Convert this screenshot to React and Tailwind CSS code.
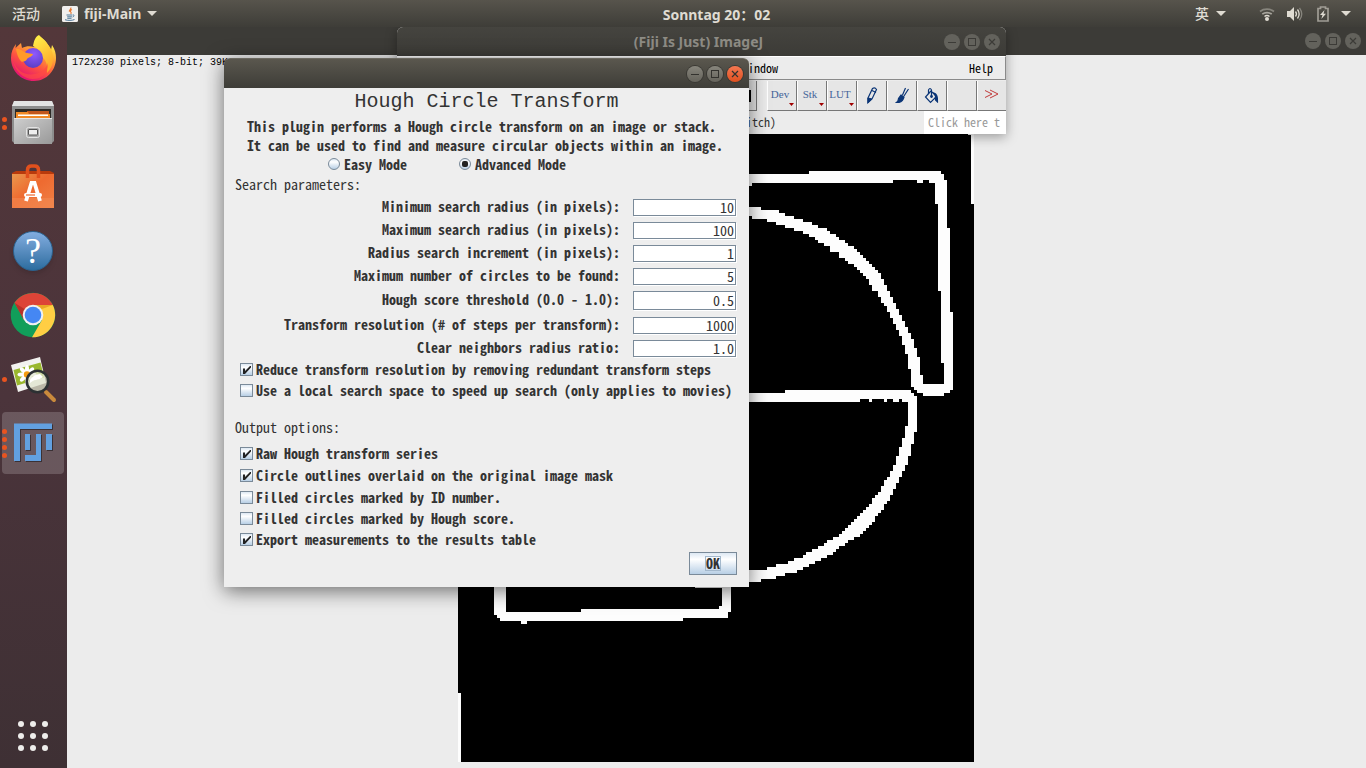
import React from "react";

const MONO = "font-['Noto_Sans_Mono_CJK_SC','DejaVu_Sans_Mono',monospace]";
const UI = "font-['Noto_Sans','Noto_Sans_CJK_SC',sans-serif]";

const FIELDS = [
  { id: "min-radius", label: "Minimum search radius (in pixels):", value: "10", row: "h-[23px]", box: "h-[17px]" },
  { id: "max-radius", label: "Maximum search radius (in pixels):", value: "100", row: "h-[23px]", box: "h-[17px]" },
  { id: "increment", label: "Radius search increment (in pixels):", value: "1", row: "h-[23px]", box: "h-[17px]" },
  { id: "max-circles", label: "Maximum number of circles to be found:", value: "5", row: "h-[23px]", box: "h-[17px]" },
  { id: "threshold", label: "Hough score threshold (0.0 - 1.0):", value: "0.5", row: "h-[25px]", box: "h-[19px]" },
  { id: "resolution", label: "Transform resolution (# of steps per transform):", value: "1000", row: "h-[25px]", box: "h-[17px]" },
  { id: "ratio", label: "Clear neighbors radius ratio:", value: "1.0", row: "h-[21px]", box: "h-[17px]" },
];

const OUTPUTS = [
  { label: "Raw Hough transform series", on: true, row: "h-[21px]" },
  { label: "Circle outlines overlaid on the original image mask", on: true, row: "h-[22px]" },
  { label: "Filled circles marked by ID number.", on: false, row: "h-[22px]" },
  { label: "Filled circles marked by Hough score.", on: false, row: "h-[21px]" },
  { label: "Export measurements to the results table", on: true, row: "h-[21px]" },
];

function Caret() {
  return (
    <svg width="10" height="5" viewBox="0 0 10 5" aria-hidden="true">
      <path d="M0 0h10L5 5z" fill="#dfdbd2" />
    </svg>
  );
}

function TopBar() {
  return (
    <header className={`${UI} grid h-[27px] shrink-0 grid-cols-[1fr_auto_1fr] items-center bg-linear-to-b from-[#57544c] to-[#3e3d38] text-sm font-bold text-[#dfdbd2]`}>
      <div className="flex items-center pl-3">
        <button className="font-medium">活动</button>
        <button className="ml-[22px] flex items-center">
          <svg width="16" height="16" viewBox="0 0 16 16" aria-hidden="true">
            <rect width="16" height="16" rx="1.5" fill="#f1efed" />
            <path d="M8.8 1.5c1 1.6-2.2 2.500-1.400 4.200M10 3.500c-2 1-1.800 1.900-1 2.800.4.600 0 1.200-.5 1.500" stroke="#e8762d" strokeWidth="1.100" fill="none" />
            <path d="M4.500 9h5.800M5.200 10.800h4.700M5.300 12.300h4.200M3 13.700c2.500 1 7.500.9 9.500-.2M10.800 9c1.700-.3 1.700 1.400-.2 2" stroke="#3a6a90" strokeWidth=".9" fill="none" />
          </svg>
          <span className="mx-1.5">fiji-Main</span>
          <Caret />
        </button>
      </div>
      <div className="pl-[67px] pt-0.5 text-center">Sonntag 20：02</div>
      <div className="flex items-center justify-end pr-[15px]">
        <button className="mr-[33px] flex items-center gap-[7px] font-medium">英<Caret /></button>
        <button className="flex items-center" aria-label="System">
          <svg width="16" height="16" viewBox="0 0 16 16" fill="none" aria-hidden="true">
            <path d="M1 5.500a10 8 0 0 1 14 0" stroke="#87857d" strokeWidth="1.700" />
            <path d="M3.300 8.200a6.500 5 0 0 1 9.400 0" stroke="#a9a69e" strokeWidth="1.700" />
            <path d="M5.500 10.500a3.500 3 0 0 1 5 0" stroke="#dfdbd2" strokeWidth="1.500" />
            <circle cx="8" cy="13" r="2" fill="#dfdbd2" />
          </svg>
          <svg className="ml-3" width="16" height="16" viewBox="0 0 16 16" fill="none" aria-hidden="true">
            <path d="M0 5h3l4-4v14l-4-4H0z" fill="#dfdbd2" />
            <path d="M8.500 5.500q2 2.500 0 5M10.500 3.500q3.300 4.500 0 9" stroke="#dfdbd2" strokeWidth="1.300" />
            <path d="M12.500 1.800q4.500 6.200 0 12.400" stroke="#87857d" strokeWidth="1.300" />
          </svg>
          <svg className="ml-3.5" width="12" height="16" viewBox="0 0 12 16" aria-hidden="true">
            <path d="M3.500 1h5v1.500H11V15H1V2.500h2.500z" fill="none" stroke="#a09d95" strokeWidth="1.700" />
            <path d="M7.500 4 3 9h2.500L4.300 13 9 7.700H6.500z" fill="#dfdbd2" />
          </svg>
          <span className="ml-3"><Caret /></span>
        </button>
      </div>
    </header>
  );
}

function FirefoxIcon() {
  return (
    <svg width="66" height="64" viewBox="0 0 66 64" aria-hidden="true">
      <defs>
        <linearGradient id="fx" x1="0.8" y1="0.1" x2="0.3" y2="1">
          <stop offset="0" stopColor="#fff44f" /><stop offset=".3" stopColor="#ffa436" />
          <stop offset=".6" stopColor="#ff5340" /><stop offset="1" stopColor="#e00c78" />
        </linearGradient>
        <radialGradient id="fxg" cx=".55" cy=".3" r=".7">
          <stop offset="0" stopColor="#9059ff" /><stop offset="1" stopColor="#5b3fc4" />
        </radialGradient>
        <linearGradient id="fxt" x1="0" y1="0" x2=".4" y2="1">
          <stop offset="0" stopColor="#fff74a" /><stop offset="1" stopColor="#ffa72b" />
        </linearGradient>
      </defs>
      <path d="M11 31c0-6 2-10 5-14l-.5 4 5.500-5 1 5c4-2 8-2 12-1 4-4 2-8 5-11 9 5 10 12 12 14l1-5c3 4 4 9 4 13 0 12-9 23-22 23S11 44 11 31z" fill="url(#fx)" />
      <path d="M33 19c1-5 2-9 6-11 6 6 10 10 12 14 4 9 2 18-4 24 1-6 0-12-5-16-1-6-5-9-9-11z" fill="url(#fxt)" />
      <circle cx="33" cy="31" r="10" fill="url(#fxg)" />
      <path d="M16 22c4-1 7 3 11 4l6 1c-1 3-4 3-6 5-1 3-4 2-5 3-3-2-5-7-6-13z" fill="#ff9a2a" />
      <path d="M13 34c4 10 12 15 22 13 6-1 11-5 13-11 0 12-8 16-15 16-10 0-18-8-20-18z" fill="#ff4a45" opacity=".65" />
    </svg>
  );
}

function FilesIcon() {
  return (
    <svg width="66" height="64" viewBox="0 0 66 64" aria-hidden="true">
      <defs>
        <linearGradient id="cab" x1="0" y1="0" x2="1" y2="1"><stop offset="0" stopColor="#cecece" /><stop offset="1" stopColor="#999" /></linearGradient>
      </defs>
      <path d="M14 10h38l2 5v35l-2 2H14l-2-2V15z" fill="#8d8d8d" />
      <path d="M14 10h38l2 5H12z" fill="#e3e3e3" />
      <path d="M15 18h36v10H15z" fill="#2d2a26" />
      <path d="M27 20h22v4H27z" fill="#c2571c" />
      <path d="M16 21h12l1 2h21v5H16z" fill="#f08a26" />
      <path d="M18 23.500h30V25H18z" fill="#fff" />
      <path d="M14 27h38v26H14z" fill="url(#cab)" />
      <path d="M14 27.500h38" stroke="#e6e6e6" />
      <rect x="26.500" y="36.500" width="13" height="10" rx="2" fill="#aaa" stroke="#e4e4e4" />
      <rect x="28.500" y="38.500" width="9" height="5.500" rx=".5" fill="#eee" stroke="#555" />
    </svg>
  );
}

function SoftwareIcon() {
  return (
    <svg width="66" height="64" viewBox="0 0 66 64" aria-hidden="true">
      <defs><linearGradient id="bag" x1="0" y1="0" x2="1" y2="1"><stop offset="0" stopColor="#e9984d" /><stop offset=".45" stopColor="#ee6a30" /><stop offset="1" stopColor="#f08045" /></linearGradient></defs>
      <path d="M12 18l4-2h34l4 2v4H12z" fill="#b93a0c" />
      <path d="M12 19h42v34H12z" fill="url(#bag)" />
      <path d="M12 43h42v10H12z" fill="#f38a53" opacity=".55" />
      <path d="M27.500 23v-8q0-4 4-4h3q4 0 4 4v8" fill="none" stroke="#e1501d" strokeWidth="3.500" />
      <path d="M26 46l5.500-18h3L40 46" fill="none" stroke="#fff" strokeWidth="3.800" />
      <rect x="24" y="38" width="18" height="4" rx="2" fill="#fff" />
      <path d="M26 40h9" stroke="#ee6a30" strokeWidth="1.200" />
    </svg>
  );
}

function HelpIcon() {
  return (
    <span className="flex h-16 w-[66px] items-center justify-center">
      <span className="flex h-10 w-10 items-center justify-center rounded-full border border-[#2a628f] bg-linear-to-b from-[#82ade0] to-[#2c6d9f] font-['Liberation_Serif',serif] text-[36px] leading-none text-white shadow-md">?</span>
    </span>
  );
}

function ChromeIcon() {
  return (
    <svg width="66" height="64" viewBox="0 0 66 64" aria-hidden="true">
      <circle cx="33" cy="32" r="22.300" fill="#119e5a" />
      <path d="M33 32V22h19.800A22.300 22.300 0 0 1 32 54.200L42 37z" fill="#ffce44" />
      <path d="M33 22h19.800A22.300 22.300 0 0 0 14.500 19.800L24 37z" fill="#dd4437" />
      <path d="M14.500 19.800 24 37l2-10z" fill="#b83228" />
      <path d="M33 22h19.800L42 26z" fill="#e9a825" />
      <circle cx="33" cy="32" r="10.300" fill="#f1f1f1" />
      <circle cx="33" cy="32" r="8.300" fill="#4587f3" />
    </svg>
  );
}

function ViewerIcon() {
  return (
    <svg width="66" height="64" viewBox="0 0 66 64" aria-hidden="true">
      <path d="M11 18l29-8 6 26-28 9z" fill="#f2f2ef" />
      <path d="M13.500 23l27-7.500 3.500 15-27 8z" fill="#9ab82e" />
      <g fill="#fff">
        {[0, 45, 90, 135, 180, 225, 270, 315].map((a) => (
          <ellipse key={a} cx="27" cy="22" rx="2" ry="4" transform={`rotate(${a} 27 27.500)`} />
        ))}
      </g>
      <circle cx="27" cy="27.500" r="3.200" fill="#f59c12" />
      <circle cx="37.500" cy="34.500" r="10.500" fill="#dfe4ce" fillOpacity=".75" />
      <path d="M30 33q4-6 10-6l3 3q-4 3-7 3t-6 3z" fill="#fff" />
      <path d="M46 45l8 8" stroke="#c98a3c" strokeWidth="4" strokeLinecap="round" />
      <circle cx="37.500" cy="34.500" r="10.700" fill="none" stroke="#2c3133" strokeWidth="2.600" />
    </svg>
  );
}

function FijiIcon() {
  return (
    <svg width="66" height="64" viewBox="0 0 66 64" aria-hidden="true">
      {["#3b3135", "#62a0e0"].map((fill, i) => (
        <path key={fill} fill={fill} transform={i === 0 ? "translate(1 1)" : undefined}
          d="M14 12.500h38V18H20v32h-6zM25 23h5v16h-5zM46 23h6v16h-6zM36 23h5v27H25v-6h11z" />
      ))}
    </svg>
  );
}

const DOCK = [
  { name: "Firefox", Icon: FirefoxIcon, dots: 0 },
  { name: "Files", Icon: FilesIcon, dots: 2 },
  { name: "Software", Icon: SoftwareIcon, dots: 0 },
  { name: "Help", Icon: HelpIcon, dots: 0 },
  { name: "Chrome", Icon: ChromeIcon, dots: 0 },
  { name: "Image Viewer", Icon: ViewerIcon, dots: 1 },
  { name: "Fiji", Icon: FijiIcon, dots: 4, active: true },
];

function Dock() {
  return (
    <nav className="flex w-[67px] shrink-0 flex-col bg-linear-to-b from-[#53373a] via-[#4b343b] to-[#3e3034]">
      {DOCK.map(({ name, Icon, dots, active }) => (
        <button key={name} aria-label={name} className="relative h-16">
          {active && <span className="absolute inset-y-px left-0.5 right-[3px] rounded bg-white/18" />}
          <span className="relative block"><Icon /></span>
          <span className="absolute inset-y-0 left-0.5 flex flex-col justify-center gap-[3px]">
            {Array.from({ length: dots }, (_, i) => (
              <span key={i} className="h-[5px] w-[5px] rounded-full bg-[#e95420]" />
            ))}
          </span>
        </button>
      ))}
      <button aria-label="Show Applications" className="mt-auto mb-[17px] ml-[18px] grid w-[30px] grid-cols-3 gap-1.5">
        {Array.from({ length: 9 }, (_, i) => (
          <span key={i} className="h-1.5 w-1.5 rounded-full bg-[#eeedeb]" />
        ))}
      </button>
    </nav>
  );
}

function WindowButtons({ focused }) {
  const base = "flex h-4 w-4 items-center justify-center rounded-full";
  const dim = focused ? "bg-linear-to-b from-[#87857c] to-[#65635b] ring-1 ring-[#3a3934]" : "bg-[#63625c]";
  const ink = focused ? "#33322e" : "#3c3b37";
  return (
    <div className="flex gap-1">
      <button aria-label="Minimize" className={`${base} ${dim}`}>
        <svg width="8" height="8" viewBox="0 0 8 8"><path d="M0 4.500h8" stroke={ink} /></svg>
      </button>
      <button aria-label="Maximize" className={`${base} ${dim}`}>
        <svg width="8" height="8" viewBox="0 0 8 8"><rect x=".5" y=".5" width="7" height="7" fill="none" stroke={ink} /></svg>
      </button>
      <button aria-label="Close" className={`${base} ${focused ? "bg-linear-to-b from-[#f47750] to-[#e0501d] ring-1 ring-[#3a3934]" : dim}`}>
        <svg width="8" height="8" viewBox="0 0 8 8"><path d="M1 1l6 6M7 1L1 7" stroke={ink} strokeWidth="1.200" /></svg>
      </button>
    </div>
  );
}

function EdgeImage() {
  return (
    <svg width="516" height="690" viewBox="0 0 172 230" shapeRendering="crispEdges" role="img" aria-label="Edge image">
      <rect width="172" height="230" fill="#000" />
      <g fill="#fdfdfd">
        <path d="M20 34H117V33H161V34H162V36H163V52H164V80H165V106H164V107H162V108H155V107H153V106H152V105H151V99H150V94H149V91H148V88H147V86H146V84H145V82H144V80H143V78H142V77H141V75H140V73H138V71H137V69H136V68H135V67H134V66H133V65H132V64H130V63H129V62H127V60H124V58H122V57H120V56H119V55H117V54H115V53H112V52H109V51H106V50H103V49H98V48H80V45H101V46H107V47H109V48H112V49H115V50H118V51H120V52H123V53H124V54H126V55H127V56H129V57H130V58H132V59H133V60H134V61H135V62H136V63H137V64H138V65H139V66H140V67H141V69H142V71H143V73H144V75H145V77H146V79H147V81H148V83H149V85H150V87H151V89H152V92H153V95H154V101H155V104H162V97H161V73H160V44H159V37H157V36H155V37H153V36H145V37H98V38H20Z" />
        <path d="M60 107H109V106H151V107H152V108H153V120H152V124H151V128H150V131H149V133H148V135H147V137H146V139H145V141H144V143H143V144H142V146H141V147H140V148H139V150H138V151H137V152H136V153H135V154H134V155H132V156H130V157H129V158H127V159H126V160H125V161H123V162H121V163H119V164H117V165H115V166H113V167H109V168H106V169H101V170H80V166H103V165H106V164H110V163H112V162H115V161H116V160H118V159H120V158H122V157H123V156H125V155H127V154H128V153H129V152H130V151H131V150H132V149H133V148H134V147H135V146H136V145H137V144H138V142H139V141H140V140H141V138H142V136H143V135H144V133H145V131H146V128H147V125H148V122H149V118H150V110H148V109H147V110H145V109H143V110H142V109H138V110H137V109H134V110H60Z" />
        <path d="M12 160H16V180H41V179H87V178H88V160H91V180H90V182H75V183H23V184H21V183H14V182H13V181H12Z" />
        <path d="M0 207H1V230H0zM171 20H172V44H171zM170 20H171V21H170zM79 171H88V172H79z" />
      </g>
    </svg>
  );
}

function ImageWindow() {
  return (
    <section className="flex min-w-0 flex-1 flex-col bg-[#ececec]">
      <div className="flex h-7 shrink-0 items-center justify-end bg-[#3c3b37] pr-[5px]">
        <WindowButtons />
      </div>
      <p className="h-[17px] shrink-0 pl-[5px] font-['Liberation_Mono',monospace] text-[10px] leading-[15px] text-black">
        172x230 pixels; 8-bit; 39K
      </p>
      <div className="flex shrink-0 justify-center pr-px">
        <EdgeImage />
      </div>
    </section>
  );
}

const NAVY = "#0b3576";
const TOOLS = [
  { name: "Dev", menu: true },
  { name: "Stk", menu: true },
  { name: "LUT", menu: true },
  {
    name: "Pencil",
    icon: (
      <g fill="none" stroke={NAVY} strokeWidth="1.200" transform="translate(-2 0)">
        <path d="M6 11 10.500 1.500q2.500-1.500 4 1L10 12l-4 3.500z" />
        <path d="M10 3.500l4 2M6 11l4 1" /><path d="M6 11.500l3 1-3 3z" fill={NAVY} />
      </g>
    ),
  },
  {
    name: "Brush",
    icon: (
      <g fill="none" stroke={NAVY} strokeWidth="1.200" transform="translate(-1 0)">
        <path d="M12.500 1 9.500 8M15.500 2l-4.500 7" /><path d="M8 8l3 2q-1 4-5 5.500H3.500q2-1.500 2-4z" fill={NAVY} />
      </g>
    ),
  },
  {
    name: "Flood Fill",
    icon: (
      <g fill="none" stroke={NAVY} strokeWidth="1.200" transform="translate(-1 0)">
        <path d="M7 5 2.500 10l5 5.500 6-6L8 4z" /><path d="M5.500 7V3q1.500-3 3 0v6" />
        <path d="M11 6q4 1 3.500 9l-2-2V9z" fill={NAVY} /><circle cx="8.500" cy="9.500" r=".8" fill={NAVY} />
      </g>
    ),
  },
  { name: "Custom" },
  {
    name: "More Tools",
    icon: <path d="M0 3l8 4-8 4M6 3l8 4-8 4" transform="translate(-1 0)" fill="none" stroke="#c03a3a" />,
  },
];

function ImageJWindow() {
  return (
    <section className={`${MONO} absolute left-[330px] top-0 flex w-[609px] flex-col overflow-hidden rounded-t-md bg-[#ececec] text-[12px] text-black shadow-[0_3px_12px_rgba(0,0,0,0.35)]`}>
      <div className={`${UI} grid h-[29px] grid-cols-[1fr_auto_1fr] items-center bg-linear-to-b from-[#45443f] to-[#3c3b37] pr-[6px] text-sm font-bold text-[#8e8c85]`}>
        <span />
        <h2>(Fiji Is Just) ImageJ</h2>
        <div className="justify-self-end"><WindowButtons /></div>
      </div>
      <nav className="flex h-6 items-center justify-between border-b border-r border-t border-b-[#8a8a8a] border-r-[#8a8a8a] border-t-white pl-[345px] pr-3">
        <button>Window</button>
        <button>Help</button>
      </nav>
      <div className="flex h-[31px] justify-end pt-px">
        <span className="mr-[10px] flex h-[30px] w-[30px] items-center justify-end border-b border-r border-[#777] bg-[#e6e6e6] pr-[5px]">
          <span className="h-3 w-3 bg-black" />
        </span>
        {TOOLS.map((tool) => (
          <button key={tool.name} aria-label={tool.name} className="relative flex h-[30px] w-[30px] shrink-0 items-center justify-center border-b border-l border-r border-b-[#777] border-l-white border-r-[#777] bg-[#e6e6e6] last:-mr-px last:border-r-0">
            {tool.menu && <span className="pb-0.5 pr-1 font-['Liberation_Serif',serif] text-[11px] text-[#45659a]">{tool.name}</span>}
            {tool.icon && <svg width="16" height="17" viewBox="0 0 16 17">{tool.icon}</svg>}
            {tool.menu && (
              <svg className="absolute bottom-1 right-0.5" width="5" height="3" viewBox="0 0 5 3"><path d="M0 0h5L2.500 3z" fill="#a00000" /></svg>
            )}
          </button>
        ))}
      </div>
      <div className="flex h-[23px] items-center">
        <span className="flex-1 pb-0.5 pr-[148px] text-right text-[#333]">switch)</span>
        <input aria-label="Search" className="h-full w-[82px] shrink-0 bg-white pb-0.5 pl-1 text-[#999] outline-none" defaultValue="Click here t" />
      </div>
    </section>
  );
}

function Check({ label, on, row }) {
  return (
    <label className={`flex items-center gap-[3px] font-bold ${row}`}>
      <span className="relative flex h-[13px] w-[13px]">
        <input type="checkbox" defaultChecked={on} className="peer h-[13px] w-[13px] appearance-none border border-[#7a8a99] bg-linear-to-b from-[#dde8f3] via-white via-30% to-[#b8cfe5]" />
        <svg className="pointer-events-none absolute left-[3px] top-[3px] hidden peer-checked:block" width="8" height="8" viewBox="0 0 8 8">
          <path d="M0 2.500h2V5L7 0h1v1.500L2 8H0z" fill="#222" />
        </svg>
      </span>
      {label}
    </label>
  );
}

function Radio({ label, on }) {
  return (
    <label className="flex items-center gap-1">
      <span className="relative flex h-3 w-3 items-center justify-center">
        <input type="radio" name="mode" defaultChecked={on} className="peer h-3 w-3 appearance-none rounded-full border border-[#7a8a99] bg-linear-to-b from-[#dde8f3] via-white via-30% to-[#b8cfe5]" />
        <span className="pointer-events-none absolute hidden h-1.5 w-1.5 rounded-[2px] bg-[#222] peer-checked:block" />
      </span>
      {label}
    </label>
  );
}

function HoughDialog() {
  return (
    <section className="absolute left-[157px] top-[31px] w-[525px] rounded-t-md shadow-[0_4px_20px_rgba(0,0,0,0.55)]">
      <div className="flex h-[30px] items-center justify-end rounded-t-md border-t border-[#6b685f] bg-linear-to-b from-[#5a574e] to-[#3e3d38] pr-[6px]">
        <WindowButtons focused />
      </div>
      <form className={`${MONO} bg-[#eee] pb-3 text-[14px] leading-[19px] text-[#333]`} onSubmit={(e) => e.preventDefault()}>
        <h1 className="h-[29px] text-center font-['Liberation_Mono',monospace] text-[20px] leading-[28px]">Hough Circle Transform</h1>
        <div className="whitespace-nowrap pl-[23px] font-bold">
          <p>This plugin performs a Hough circle transform on an image or stack.</p>
          <p>It can be used to find and measure circular objects within an image.</p>
        </div>
        <div className="flex h-[18px] items-center gap-[52px] pl-[104px] font-bold">
          <Radio label="Easy Mode" />
          <Radio label="Advanced Mode" on />
        </div>
        <h2 className="h-[23px] pl-[11px] leading-[23px]">Search parameters:</h2>
        {FIELDS.map((f) => (
          <div key={f.id} className={`flex items-center justify-end gap-[13px] pr-[13px] ${f.row}`}>
            <label htmlFor={f.id} className="whitespace-nowrap pb-0.5 font-bold">{f.label}</label>
            <input id={f.id} defaultValue={f.value} className={`w-[103px] border border-[#7a8a99] bg-white pr-px text-right shadow-[1px_1px_0_#fff] outline-none ${f.box}`} />
          </div>
        ))}
        <div className="whitespace-nowrap pl-4">
          <Check label="Reduce transform resolution by removing redundant transform steps" on row="h-[21px]" />
          <Check label="Use a local search space to speed up search (only applies to movies)" row="h-[21px]" />
        </div>
        <h2 className="flex h-[42px] items-center pl-[11px] pt-[10px]">Output options:</h2>
        <div className="pl-4">
          {OUTPUTS.map((o) => <Check key={o.label} {...o} />)}
        </div>
        <div className="flex justify-end pr-3 pt-0.5">
          <button className="flex h-[23px] w-12 items-center justify-center border border-[#7a8a99] bg-linear-to-b from-[#dde8f3] via-white via-30% to-[#b8cfe5] font-bold">
            <span className="flex h-[15px] items-center border border-[#a3b8cc]">OK</span>
          </button>
        </div>
      </form>
    </section>
  );
}

export default function App() {
  return (
    <div className="flex h-screen w-full flex-col overflow-hidden">
      <TopBar />
      <div className="flex min-h-0 flex-1">
        <Dock />
        <main className="relative flex min-w-0 flex-1 overflow-hidden">
          <ImageWindow />
          <ImageJWindow />
          <HoughDialog />
        </main>
      </div>
    </div>
  );
}
